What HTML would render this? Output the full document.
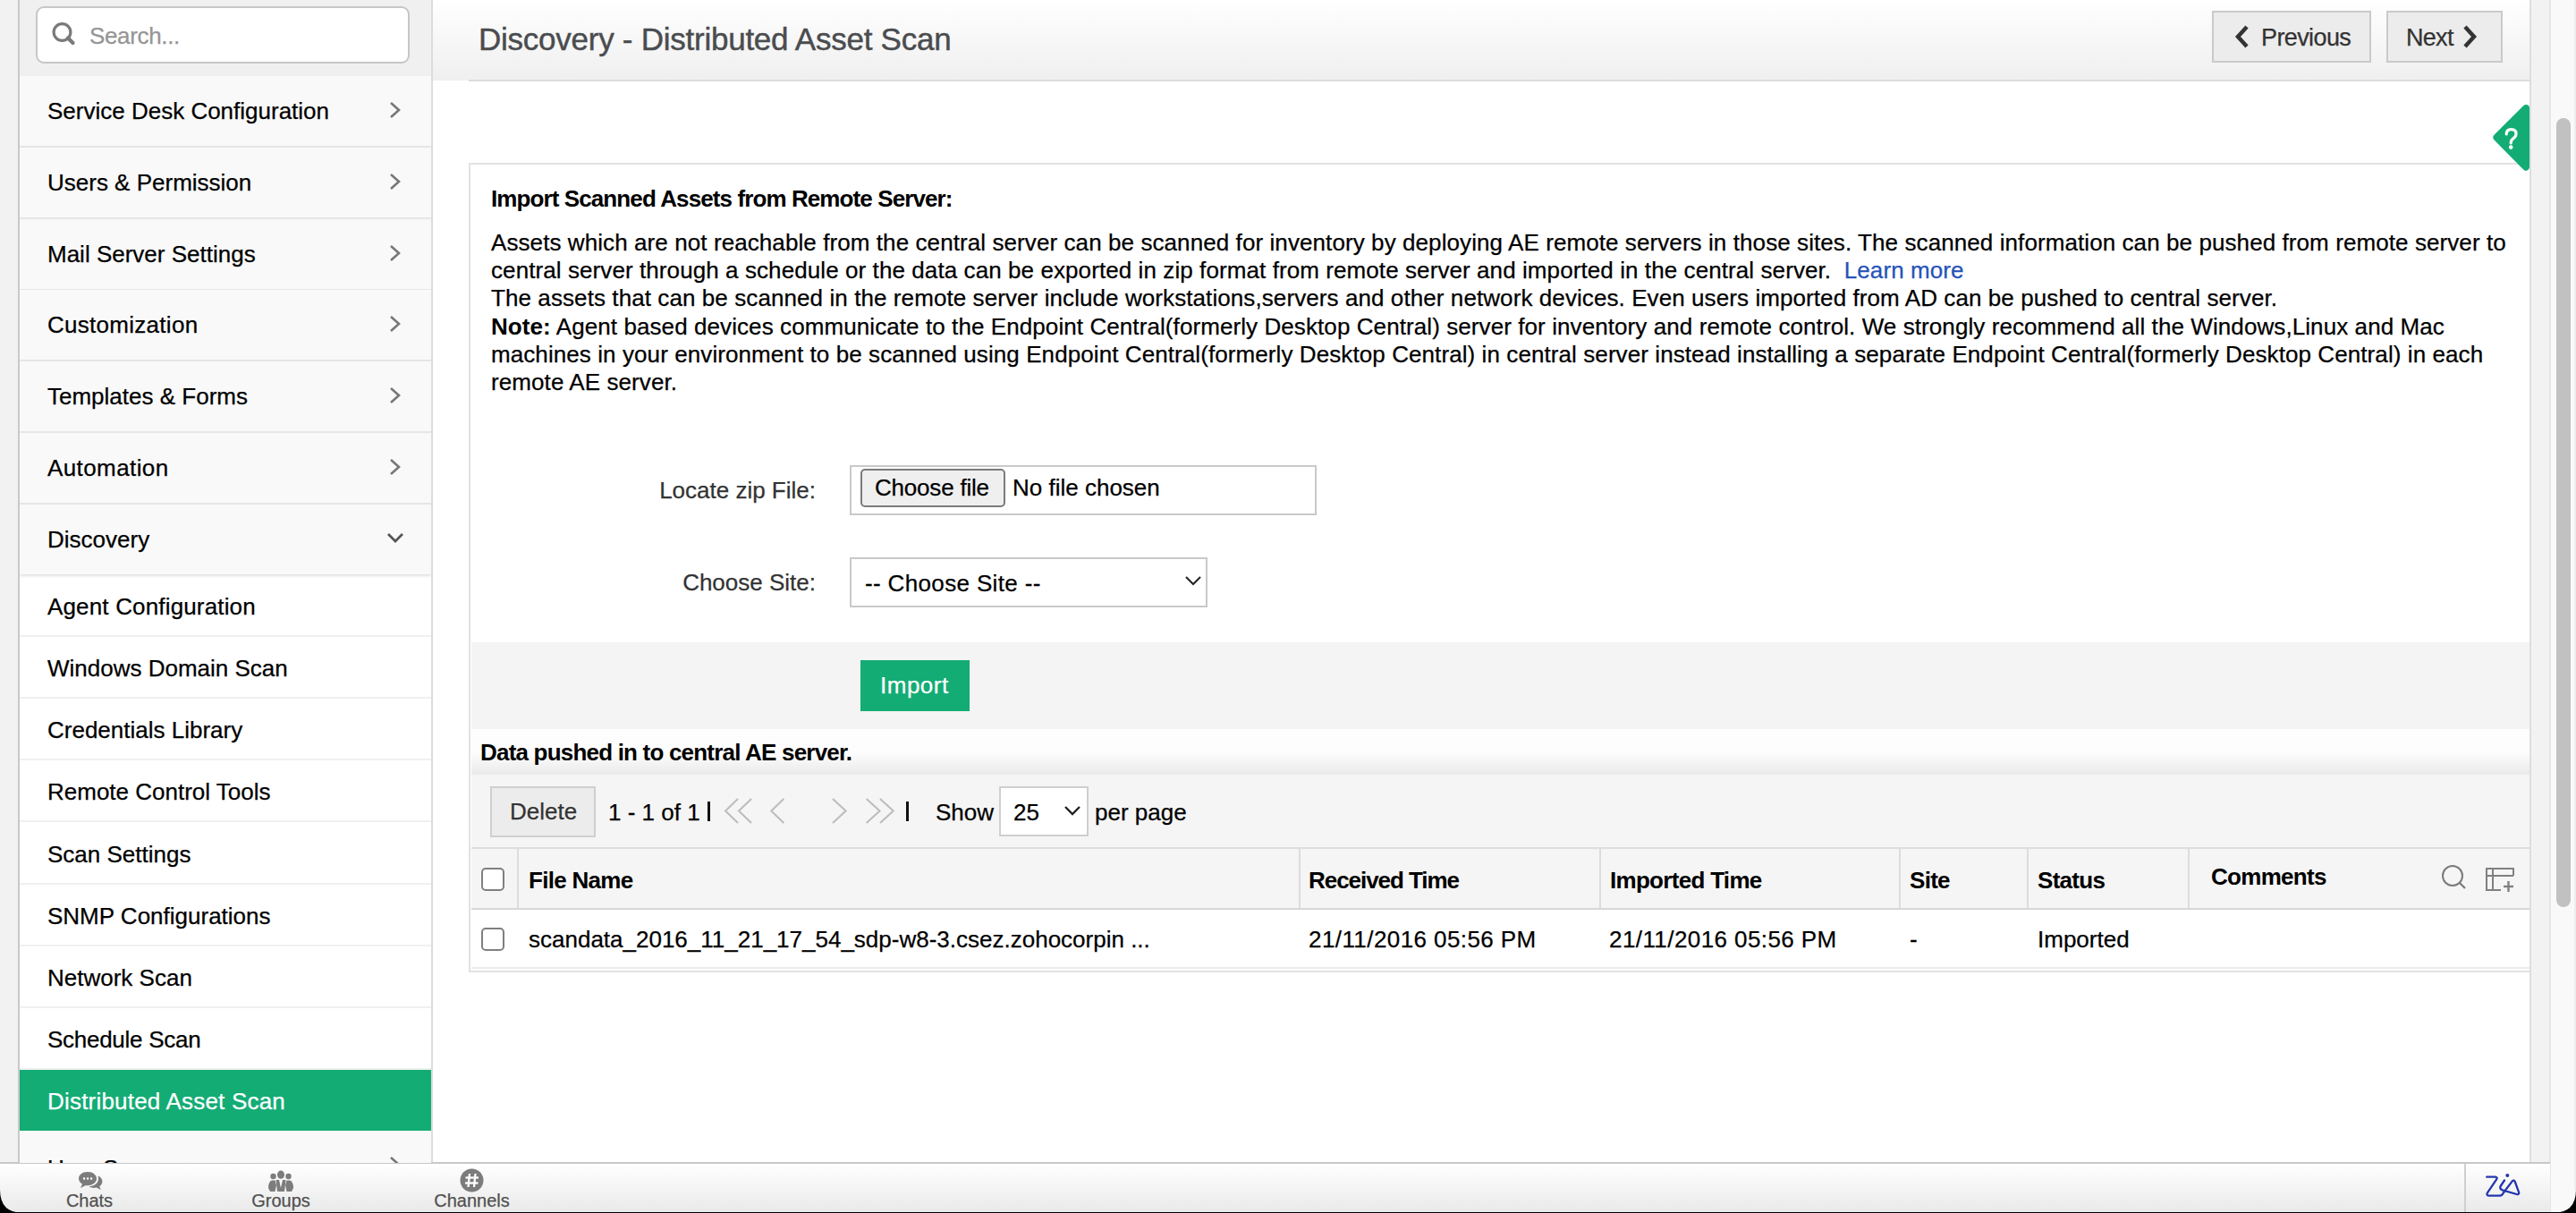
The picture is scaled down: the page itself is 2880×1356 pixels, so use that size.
<!DOCTYPE html>
<html><head><meta charset="utf-8">
<style>
*{box-sizing:border-box;margin:0;padding:0}
html,body{width:2880px;height:1356px;overflow:hidden;background:#f2f2f2;font-family:"Liberation Sans",sans-serif;color:#000;-webkit-text-stroke-width:0.25px}
b,.th,.bold,[style*="font-weight:bold"]{-webkit-text-stroke-width:0}
.abs{position:absolute}
#leftstrip{left:0;top:0;width:20px;height:1356px;background:#f2f2f2}
#leftline{left:20px;top:0;width:2px;height:1300px;background:#c9c9c9}
#sidebar{left:22px;top:0;width:460px;height:1300px;background:#fff;overflow:hidden}
#sbline{left:482px;top:0;width:2px;height:1300px;background:#dcdcdc}
#searcharea{left:0;top:0;width:460px;height:85px;background:#f0f0f0}
#search{left:18px;top:7px;width:418px;height:64px;background:#fff;border:2px solid #c6c6c6;border-radius:9px}
#search .ph{position:absolute;left:58px;top:16px;letter-spacing:-0.35px;font-size:26px;color:#959595;line-height:30px}
.item{position:absolute;left:0;width:460px;height:80px;background:#f9f9f9;border-bottom:2px solid #e6e6e6}
.item .t{position:absolute;left:31px;top:24px;font-size:26px;line-height:30px;color:#000}
.item svg{position:absolute;left:413px;top:28px}
.sub{position:absolute;left:0;width:460px;height:69px;background:#fff;border-bottom:2px solid #f0f0f0}
.sub .t{position:absolute;left:31px;top:20px;font-size:26px;line-height:30px;color:#000}
.sub.active{background:#13ac75;border-bottom-color:#13ac75}
.sub.active .t{color:#fff}
#content{left:484px;top:0;width:2345px;height:1300px;background:#fff}
#header{left:0;top:0;width:2345px;height:90px;background:linear-gradient(#fff,#efefef)}
#hdrline{left:40px;top:89px;width:2305px;height:2px;background:#dcdcdc}
#title{left:51px;top:23px;font-size:35px;line-height:42px;color:#4a4c4f;letter-spacing:-0.25px;-webkit-text-stroke:0.45px #4a4c4f}
.navbtn{position:absolute;top:12px;height:58px;background:#ececec;border:2px solid #cacaca}
.navbtn .t{position:absolute;top:13px;font-size:27px;line-height:30px;color:#333}
#cline{left:2828px;top:0;width:2px;height:1300px;background:#dedede}
#strip1{left:2830px;top:0;width:21px;height:1356px;background:#f2f2f2}
#strip1line{left:2850px;top:0;width:2px;height:1356px;background:#e6e6e6}
#rightline{left:2878px;top:0;width:2px;height:1330px;background:#ededed}
#strip2{left:2852px;top:0;width:28px;height:1356px;background:#f9f9f9}
#thumb{left:2858px;top:132px;width:16px;height:882px;background:#c1c1c1;border-radius:8px}
#box{left:524px;top:182px;width:2306px;height:905px;border:2px solid #e2e2e2;border-right:none;background:#fff}
#chatbar{left:0;top:1299px;width:2851px;height:57px;border-top:2px solid #c8c8c8;background:linear-gradient(#fff,#e9e9e9)}

.txt{position:absolute;font-size:26px;line-height:30px;white-space:nowrap}
#para{left:549px;top:256px;letter-spacing:0.085px;width:2270px;font-size:26px;line-height:31.2px;white-space:normal;color:#000}
#para b{font-weight:bold}
#para a{color:#2553b8;text-decoration:none}
.lbl{position:absolute;font-size:26px;line-height:30px;color:#333;text-align:right;white-space:nowrap}
#filebox{left:950px;top:520px;width:522px;height:56px;border:2px solid #c9c9c9;background:#fff}
#choosebtn{left:962px;top:524px;width:162px;height:43px;border:2px solid #7b7b7b;border-radius:5px;background:#efefef}
#selbox{left:950px;top:623px;width:400px;height:56px;border:2px solid #c9c9c9;background:#fff}
#graybar{left:527px;top:718px;width:2301px;height:97px;background:#f4f4f4}
#importbtn{left:962px;top:738px;width:122px;height:57px;background:#13ac75}
#dphdr{left:527px;top:815px;width:2301px;height:52px;background:linear-gradient(#fdfdfd 50%,#e9e9e9)}
#toolbar{left:527px;top:866px;width:2301px;height:82px;background:#f5f5f5}
#delbtn{left:548px;top:879px;width:118px;height:57px;background:#ececec;border:2px solid #cfcfcf}
#pgsel{left:1117px;top:879px;width:100px;height:56px;background:#fff;border:2px solid #cfcfcf}
#thead{left:527px;top:947px;width:2301px;height:70px;background:#f5f5f5;border-top:2px solid #dedede;border-bottom:2px solid #d6d6d6}
.coldiv{position:absolute;top:949px;width:2px;height:66px;background:#dcdcdc}
#trow{left:527px;top:1017px;width:2301px;height:66px;background:#fff;border-bottom:2px solid #ececec}
.cb{position:absolute;width:26px;height:26px;border:2px solid #7f7f7f;border-radius:5px;background:#fff}
.th{position:absolute;font-size:26px;line-height:30px;font-weight:bold;white-space:nowrap;letter-spacing:-0.7px}
.td{position:absolute;font-size:26px;line-height:30px;white-space:nowrap}

#helptab{left:2786px;top:116px;width:43px;height:76px;overflow:hidden}
.chat{position:absolute;top:1299px;height:57px;text-align:center}
.chat .t{position:absolute;left:0;width:100%;top:31px;font-size:20px;line-height:24px;color:#515151}
#zdiv{left:2755px;top:1301px;width:2px;height:55px;background:#cfcfcf}
#corner-l{left:0;top:1330px;width:26px;height:26px}
#corner-r{left:2854px;top:1330px;width:26px;height:26px}
#bottomblack{left:0;top:1355px;width:2880px;height:1px;background:#000}
</style></head><body>
<div id="leftstrip" class="abs"></div>
<div id="leftline" class="abs"></div>
<div id="sidebar" class="abs">
  <div id="searcharea" class="abs">
    <div id="search" class="abs">
      <svg class="abs" style="left:13px;top:10px" width="40" height="40" viewBox="0 0 40 40"><circle cx="14.5" cy="17" r="9.4" fill="none" stroke="#7a7a7a" stroke-width="3.2"/><line x1="21" y1="23.5" x2="26.5" y2="29" stroke="#7a7a7a" stroke-width="4.2" stroke-linecap="round"/></svg>
      <div class="ph">Search...</div>
    </div>
  </div>
  <div class="item" style="top:85.0px"><div class="t">Service Desk Configuration</div><svg width="14" height="20" viewBox="0 0 14 20"><polyline points="2,2 11,10 2,18" fill="none" stroke="#777" stroke-width="2.6"/></svg></div>
  <div class="item" style="top:164.8px"><div class="t">Users &amp; Permission</div><svg width="14" height="20" viewBox="0 0 14 20"><polyline points="2,2 11,10 2,18" fill="none" stroke="#777" stroke-width="2.6"/></svg></div>
  <div class="item" style="top:244.6px"><div class="t">Mail Server Settings</div><svg width="14" height="20" viewBox="0 0 14 20"><polyline points="2,2 11,10 2,18" fill="none" stroke="#777" stroke-width="2.6"/></svg></div>
  <div class="item" style="top:324.4px"><div class="t" style="letter-spacing:0.28px">Customization</div><svg width="14" height="20" viewBox="0 0 14 20"><polyline points="2,2 11,10 2,18" fill="none" stroke="#777" stroke-width="2.6"/></svg></div>
  <div class="item" style="top:404.2px"><div class="t">Templates &amp; Forms</div><svg width="14" height="20" viewBox="0 0 14 20"><polyline points="2,2 11,10 2,18" fill="none" stroke="#777" stroke-width="2.6"/></svg></div>
  <div class="item" style="top:484.0px"><div class="t" style="letter-spacing:0.4px">Automation</div><svg width="14" height="20" viewBox="0 0 14 20"><polyline points="2,2 11,10 2,18" fill="none" stroke="#777" stroke-width="2.6"/></svg></div>
  <div class="item" style="top:563.8px;height:78.4px;border-bottom:none;box-shadow:0 2px 3px rgba(0,0,0,0.12);z-index:2"><div class="t">Discovery</div><svg style="left:410px;top:30px" width="20" height="14" viewBox="0 0 20 14"><polyline points="2,3 10,11 18,3" fill="none" stroke="#555" stroke-width="2.8"/></svg></div>
  <div class="sub" style="top:643.00px"><div class="t" style="letter-spacing:0.16px">Agent Configuration</div></div>
  <div class="sub" style="top:712.15px"><div class="t">Windows Domain Scan</div></div>
  <div class="sub" style="top:781.30px"><div class="t">Credentials Library</div></div>
  <div class="sub" style="top:850.45px"><div class="t">Remote Control Tools</div></div>
  <div class="sub" style="top:919.60px"><div class="t">Scan Settings</div></div>
  <div class="sub" style="top:988.75px"><div class="t">SNMP Configurations</div></div>
  <div class="sub" style="top:1057.90px"><div class="t">Network Scan</div></div>
  <div class="sub" style="top:1127.05px"><div class="t" style="letter-spacing:-0.27px">Schedule Scan</div></div>
  <div class="sub active" style="top:1196.20px;height:68px"><div class="t" style="letter-spacing:0.2px">Distributed Asset Scan</div></div>
  <div class="item" style="top:1264px;z-index:1"><div class="t" style="top:27px">User Survey</div><svg style="top:28px" width="14" height="20" viewBox="0 0 14 20"><polyline points="2,2 11,10 2,18" fill="none" stroke="#777" stroke-width="2.6"/></svg></div>
</div>
<div id="sbline" class="abs"></div>
<div id="content" class="abs">
  <div id="header" class="abs">
    <div id="title" class="abs">Discovery - Distributed Asset Scan</div>
  </div>
  <div id="hdrline" class="abs"></div>
</div>
<div class="navbtn" style="left:2473px;width:178px"><svg class="abs" style="left:22px;top:14px" width="20" height="26" viewBox="0 0 20 26"><polyline points="15,2 5,13 15,24" fill="none" stroke="#333" stroke-width="4.5"/></svg><div class="t" style="left:53px;letter-spacing:-0.6px">Previous</div></div>
<div class="navbtn" style="left:2668px;width:130px"><div class="t" style="left:20px;letter-spacing:-0.7px">Next</div><svg class="abs" style="left:81px;top:14px" width="20" height="26" viewBox="0 0 20 26"><polyline points="5,2 15,13 5,24" fill="none" stroke="#333" stroke-width="4.5"/></svg></div>
<div id="box" class="abs"></div>

<div class="txt" style="left:549px;top:207px;font-weight:bold;letter-spacing:-0.9px">Import Scanned Assets from Remote Server:</div>
<div id="para" class="abs">Assets which are not reachable from the central server can be scanned for inventory by deploying AE remote servers in those sites. The scanned information can be pushed from remote server to central server through a schedule or the data can be exported in zip format from remote server and imported in the central server. &nbsp;<a>Learn more</a><br>The assets that can be scanned in the remote server include workstations,servers and other network devices. Even users imported from AD can be pushed to central server.<br><b>Note:</b> Agent based devices communicate to the Endpoint Central(formerly Desktop Central) server for inventory and remote control. We strongly recommend all the Windows,Linux and Mac machines in your environment to be scanned using Endpoint Central(formerly Desktop Central) in central server instead installing a separate Endpoint Central(formerly Desktop Central) in each remote AE server.</div>
<div class="lbl" style="left:600px;width:312px;top:533px">Locate zip File:</div>
<div id="filebox" class="abs"></div>
<div id="choosebtn" class="abs"><div class="txt" style="left:14px;top:4px;color:#000;letter-spacing:-0.2px">Choose file</div></div>
<div class="txt" style="left:1132px;top:530px">No file chosen</div>
<div class="lbl" style="left:600px;width:312px;top:636px">Choose Site:</div>
<div id="selbox" class="abs"><div class="txt" style="left:15px;top:12px;letter-spacing:0.35px">-- Choose Site --</div>
<svg class="abs" style="left:372px;top:17px" width="20" height="14" viewBox="0 0 20 14"><polyline points="2,3 10,11 18,3" fill="none" stroke="#222" stroke-width="2"/></svg></div>
<div id="graybar" class="abs"></div>
<div id="importbtn" class="abs"><div class="txt" style="left:22px;top:13px;color:#fff;letter-spacing:0.5px">Import</div></div>
<div id="dphdr" class="abs"></div>
<div class="txt" style="left:537px;top:826px;font-weight:bold;letter-spacing:-0.8px">Data pushed in to central AE server.</div>
<div id="toolbar" class="abs"></div>
<div id="delbtn" class="abs"><div class="txt" style="left:20px;top:11px;color:#333">Delete</div></div>
<div class="txt" style="left:680px;top:893px">1 - 1 of 1</div><div class="abs" style="left:791px;top:896px;width:3px;height:22px;background:#111"></div>
<svg class="abs" style="left:805px;top:890px" width="200" height="34" viewBox="0 0 200 34"><g fill="none" stroke="#bdbdbd" stroke-width="2.1"><polyline points="20,3 6,16.5 20,30"/><polyline points="35,3 21,16.5 35,30"/><polyline points="71.3,3 57.3,16.5 71.3,30"/><polyline points="126,3 140.6,16.5 126,30"/><polyline points="163.7,3 178.5,16.5 163.7,30"/><polyline points="179,3 193.7,16.5 179,30"/></g></svg>
<div class="abs" style="left:1013px;top:896px;width:3px;height:22px;background:#111"></div>
<div class="txt" style="left:1046px;top:893px">Show</div>
<div id="pgsel" class="abs"><div class="txt" style="left:14px;top:12px">25</div><svg class="abs" style="left:70px;top:18px" width="20" height="14" viewBox="0 0 20 14"><polyline points="2,3 10,11 18,3" fill="none" stroke="#222" stroke-width="2.4"/></svg></div>
<div class="txt" style="left:1224px;top:893px">per page</div>
<div id="thead" class="abs"></div>
<div class="coldiv" style="left:578px"></div>
<div class="coldiv" style="left:1452px"></div>
<div class="coldiv" style="left:1788px"></div>
<div class="coldiv" style="left:2123px"></div>
<div class="coldiv" style="left:2266px"></div>
<div class="coldiv" style="left:2446px"></div>
<div class="cb" style="left:538px;top:970px"></div>
<div class="th" style="left:591px;top:969px">File Name</div>
<div class="th" style="left:1463px;top:969px;letter-spacing:-1.05px">Received Time</div>
<div class="th" style="left:1800px;top:969px">Imported Time</div>
<div class="th" style="left:2135px;top:969px">Site</div>
<div class="th" style="left:2278px;top:969px">Status</div>
<div class="th" style="left:2472px;top:965px">Comments</div>
<svg class="abs" style="left:2725px;top:964px" width="36" height="36" viewBox="0 0 36 36"><circle cx="17" cy="15" r="11" fill="none" stroke="#7a7a7a" stroke-width="2"/><line x1="25" y1="23" x2="31" y2="29" stroke="#7a7a7a" stroke-width="2.2"/></svg>
<svg class="abs" style="left:2775px;top:966px" width="40" height="36" viewBox="0 0 40 36"><g fill="none" stroke="#808080" stroke-width="2"><polyline points="21,29 5,29 5,5 35,5 35,13"/><line x1="5" y1="13" x2="35" y2="13"/><line x1="12" y1="5" x2="12" y2="29"/></g><g stroke="#808080" stroke-width="2.4"><line x1="24" y1="25" x2="35" y2="25"/><line x1="29.5" y1="19" x2="29.5" y2="31"/></g></svg>
<div id="trow" class="abs"></div>
<div class="cb" style="left:538px;top:1037px"></div>
<div class="td" style="left:591px;top:1035px">scandata_2016_11_21_17_54_sdp-w8-3.csez.zohocorpin ...</div>
<div class="td" style="left:1463px;top:1035px;letter-spacing:0.42px">21/11/2016 05:56 PM</div>
<div class="td" style="left:1799px;top:1035px;letter-spacing:0.42px">21/11/2016 05:56 PM</div>
<div class="td" style="left:2135px;top:1035px">-</div>
<div class="td" style="left:2278px;top:1035px">Imported</div>
<div id="cline" class="abs"></div>
<div id="strip1" class="abs"></div>
<div id="strip1line" class="abs"></div>
<div id="strip2" class="abs"></div>
<div id="rightline" class="abs"></div><div id="thumb" class="abs"></div>

<svg id="helptab" class="abs" viewBox="0 0 43 76"><polygon points="38,5 5.4,37.6 38,70.7" fill="#13ac75" stroke="#13ac75" stroke-width="8" stroke-linejoin="round"/><path d="M16.2,34 Q16.2,28.6 21.6,28.6 Q27,28.6 27,33.6 Q27,37 23.6,39 Q21.2,40.6 21.2,44" fill="none" stroke="#fff" stroke-width="3.2" stroke-linecap="round"/><circle cx="21.2" cy="48.6" r="2.3" fill="#fff"/></svg>
<div id="chatbar" class="abs"></div>
<div class="chat" style="left:60px;width:80px"><svg class="abs" style="left:27px;top:10px" width="28" height="22" viewBox="0 0 28 22"><path d="M11,1 C5,1 1,4.5 1,8.5 C1,11 2.5,13.2 5,14.6 L3,19 L9,16 C9.7,16.1 10.3,16.2 11,16.2 C17,16.2 21,12.7 21,8.6 C21,4.5 17,1 11,1 Z" fill="#7c7c7c"/><path d="M22.5,5.2 C25.5,6.5 27.4,9 27.4,11.8 C27.4,14 26.2,16 24.2,17.3 L25.8,21 L20.6,18.6 C19.8,18.8 19,18.9 18.2,18.9 C16,18.9 14,18.3 12.5,17.3 C18.5,17 23,13.3 23,8.7 C23,7.4 22.8,6.2 22.5,5.2 Z" fill="#7c7c7c"/><g fill="#fff"><rect x="6" y="7.4" width="2.2" height="2.2"/><rect x="10" y="7.4" width="2.2" height="2.2"/><rect x="14" y="7.4" width="2.2" height="2.2"/></g></svg><div class="t">Chats</div></div>
<div class="chat" style="left:273px;width:82px"><svg class="abs" style="left:27px;top:9px" width="28" height="25" viewBox="0 0 28 25"><g fill="#7c7c7c"><circle cx="5.5" cy="7" r="3.2"/><circle cx="22.5" cy="7" r="3.2"/><ellipse cx="14" cy="5.2" rx="4" ry="4.6"/><path d="M0,20 Q0,13 4,11.5 L7.5,11.5 L9,17 L7.5,24 L2,24 Z"/><path d="M28,20 Q28,13 24,11.5 L20.5,11.5 L19,17 L20.5,24 L26,24 Z"/><path d="M8.5,11 L12,11 L14,20 L16,11 L19.5,11 L18,24 L10,24 Z"/></g></svg><div class="t">Groups</div></div>
<div class="chat" style="left:480px;width:95px"><svg class="abs" style="left:34px;top:7px" width="27" height="27" viewBox="0 0 27 27"><circle cx="13.5" cy="13.5" r="13" fill="#7c7c7c"/><g stroke="#fff" stroke-width="2.3"><line x1="11" y1="6" x2="9.5" y2="21"/><line x1="17.5" y1="6" x2="16" y2="21"/><line x1="6.5" y1="10.5" x2="21" y2="10.5"/><line x1="6" y1="16.5" x2="20.5" y2="16.5"/></g></svg><div class="t">Channels</div></div>
<div id="zdiv" class="abs"></div>
<svg class="abs" style="left:2770px;top:1305px" width="60" height="40" viewBox="0 0 60 40"><g fill="none" stroke="#2437ad" stroke-width="2.3" stroke-linecap="round" stroke-linejoin="round"><path d="M10.2,10.7 L19.5,10.7 Q22.8,10.9 21,13.6 L10.8,28.6 Q9.6,31.6 13,31.6 L25,31.6 Q27.4,31.4 29,28.2 L38.6,15.6 Q40.6,13.4 41.8,16 L46,27.6 Q46.8,30.8 43.6,30 L27.6,25.4 Q24.4,24 25.6,21 L30,14.5"/></g><circle cx="33.3" cy="8.9" r="2" fill="#2437ad"/></svg>
<svg id="corner-l" class="abs" viewBox="0 0 26 26"><path d="M0,0 Q0,26 26,26 L0,26 Z" fill="#000"/></svg>
<svg id="corner-r" class="abs" viewBox="0 0 26 26"><path d="M26,0 Q26,26 0,26 L26,26 Z" fill="#000"/></svg>
<div id="bottomblack" class="abs"></div>
</body></html>
